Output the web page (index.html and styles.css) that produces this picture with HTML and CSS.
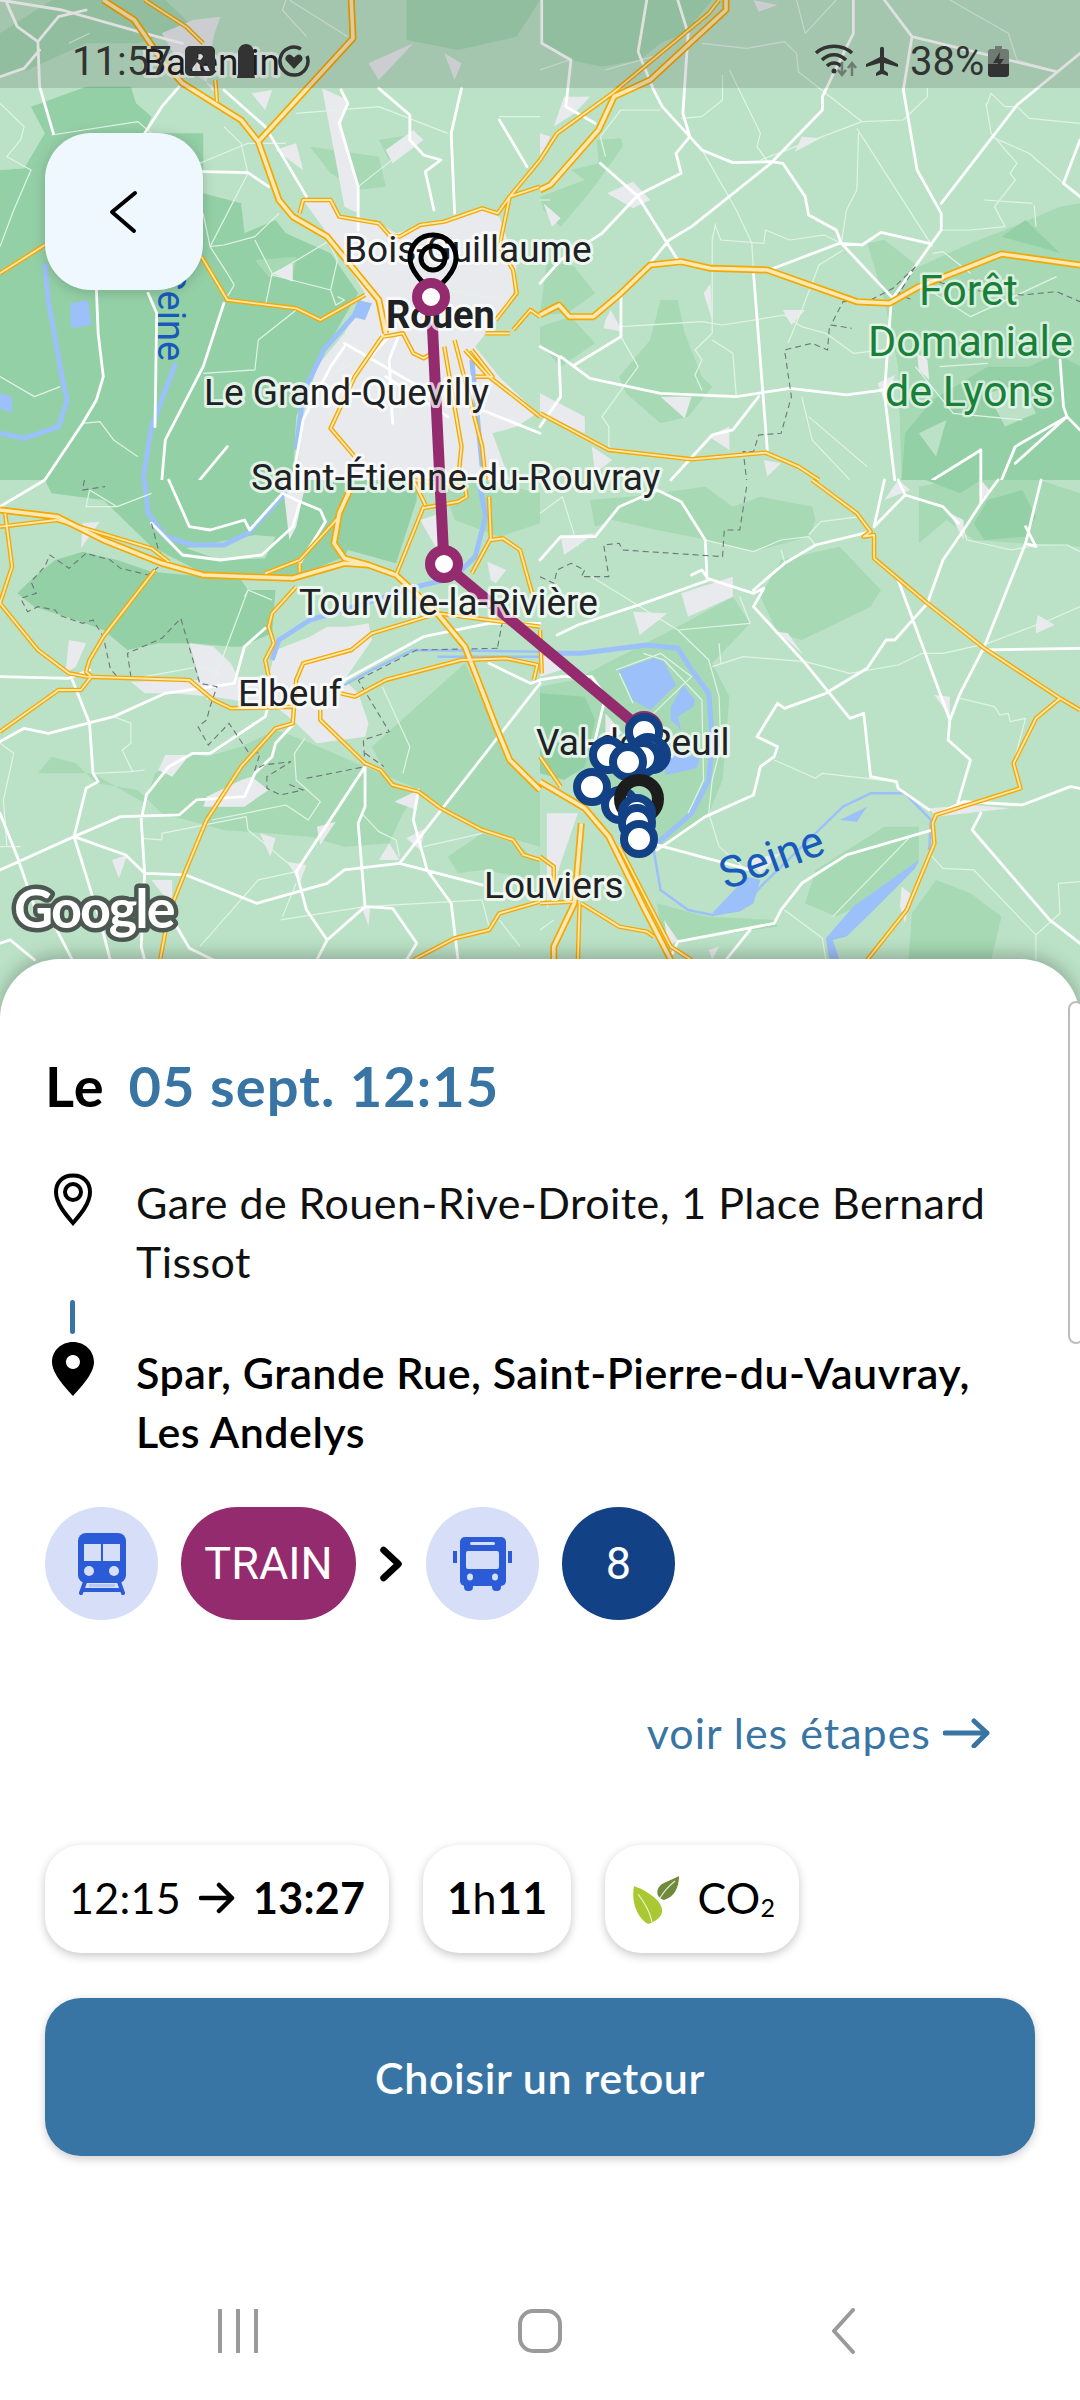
FILE: index.html
```html
<!DOCTYPE html>
<html lang="fr">
<head>
<meta charset="utf-8">
<title>Trajet</title>
<link rel="stylesheet" href="styles.css">
</head>
<body>
<div class="phone">
  <div class="map">
    <svg class="map-art" width="1080" height="1019" viewBox="0 0 1080 1019" xmlns="http://www.w3.org/2000/svg">
      <defs>
        <path id="y1" d="M420 0L540 80L590 130M625 240L630 305M0 820L130 735M585 770L660 900L860 925L930 960L1060 885M870 640L880 600L960 600L985 650L1100 670L1130 705L1160 710L1220 675L1290 665L1400 625L1445 640L1480 590L1568 560M1445 640L1480 590L1568 480M1480 590L1450 740L1490 810L1500 880L1440 960M1410 1000L1480 1000M1490 990L1540 930L1568 950M1110 1010L1030 1130L960 1285L1030 1370M1115 1010L1170 1000L1200 1060L1230 1075L1270 1050M1290 1040L1340 1340L1330 1440M1320 1020L1400 1340L1410 1440M1350 1050L1420 1130L1568 1250M1380 1130L1430 1130L1370 1050"/>
        <path id="w1" d="M300 0L390 60L470 180L530 250L700 360L750 425L810 600L850 650L950 710L1100 900L1120 1000M1020 0L1025 115L750 425"/>
        <path id="y2" d="M520 0L490 40L210 280L50 400L0 480M0 1240L200 1350L440 1378L655 1358L750 1400L810 1440"/>
        <path id="w2" d="M540 0L540 30L320 240L215 290L170 390L30 555L0 570M0 945L55 915L85 950L155 950L235 880L320 795L410 785L495 805L660 810L920 905L1015 910L1100 860L1340 762L1568 795"/>
        <path id="y3" d="M0 140L165 120L440 205L490 245M15 100L35 260L0 370L110 510L200 580L250 590L550 600L620 660L670 685L850 680M450 270L300 470L260 540L250 575L265 590L235 630L170 630L0 755M985 110L870 240L770 280M870 250L870 275M860 320L790 400L780 440L795 490L770 540L780 590M1230 80L1150 285M1225 85L1330 65L1355 50L1350 20L1200 0M1200 0L1235 75M1420 50L1425 175L1370 280M1425 180L1460 175L1510 210L1545 340M1568 440L1270 400L1080 460L1020 510L880 550L860 600L850 730L800 745L700 860L600 1020L540 1170L490 1300L465 1440M990 640L1030 650L1120 600L1340 540L1470 535L1560 555L1550 600M930 690L930 720L1060 850L1105 870L1140 915L1215 935L1280 985L1400 1050L1490 1080L1520 1125L1568 1140M1568 1265L1450 1300L1420 1350L1320 1375L1200 1440"/>
        <path id="w3" d="M0 90L165 110L300 180L470 250L590 285L850 295L1000 250L1070 255L1150 285L1270 400L1350 500L1440 740L1480 840L1568 930M1020 20L985 100L970 190L1000 235L1070 255"/>
        <path id="y4" d="M790 0L920 100L960 155L940 170L970 165L970 235L1125 370L1290 505L1510 655L1568 690M1510 655L1440 715L1375 850L1395 925L1150 1005L1140 1030L1145 1090L1065 1290L950 1440M0 830L60 920M0 450L5 580M115 1270L110 1440M120 1270L230 1340L310 1355L330 1370M0 1270L100 1265M0 1130L40 1160L40 1220M230 1100L380 1400L440 1440"/>
        <path id="w4" d="M0 905L130 985L200 1070L300 1280L380 1440M120 1030L100 1270L40 1400L40 1440"/>
      </defs>

      <rect class="land" x="0" y="0" width="1080" height="1019"/>

      <g transform="scale(.3444 .3333)">
        <path class="forest" d="M0 510L70 505L130 400L90 320L250 260L380 260L395 310L440 350L420 400L590 400L590 580L700 610L710 700L800 660L830 700L960 760L1040 880L1000 950L900 1130L860 1250L850 1440L0 1440Z"/>
        <path class="mid" d="M150 0L480 0L560 80L400 130L250 130L80 210L0 230L0 100Z"/>
        <path class="mid" d="M740 780L860 770L850 830L780 830ZM900 440L1100 470L1120 560L1040 570L960 520ZM1100 420L1220 400L1130 480ZM1180 0L1568 0L1500 110L1330 150L1180 120Z"/>
        <path class="light" d="M0 400L130 400L70 505L0 510Z"/>
        <path class="urban" d="M880 600L960 600L1000 660L1100 670L1150 700L1400 630L1450 650L1500 800L1490 880L1440 960L1380 1040L1450 1130L1560 1240L1500 1280L1430 1300L1480 1440L860 1440L880 1250L920 1100L1000 1000L1060 880L950 700ZM935 265L1010 300L990 370L1040 560L1040 640L1000 620L960 400ZM1290 160L1340 190L1320 240ZM470 100L560 60L640 50L620 110L600 250L640 300L620 260L520 190ZM730 280L790 270L770 330ZM800 450L860 430L880 510ZM790 820L850 790L850 845ZM1120 450L1200 390L1230 420L1140 490ZM1070 190L1200 130L1100 240Z"/>
        <path class="water-fill" d="M205 910L255 900L265 975L205 985ZM0 1180L35 1190L35 1240L0 1225ZM1040 900L1080 910L1060 960L1020 950Z"/>
        <path class="water" d="M130 790L140 900L180 1130L195 1200L170 1280L70 1315L0 1300M510 1090L440 1280L415 1440M1060 910L1000 980L940 1050L880 1180L860 1350M1370 1080L1400 1400"/>
        <path class="thin" d="M0 310L70 380L60 420L20 470L90 510L40 630L0 740M150 405L400 365L440 400M580 490L720 430L830 430M650 380L700 430L720 520L610 740L650 735L740 710L810 640M590 640L610 740L660 820L680 855L660 890M740 720L790 820L770 920M790 825L960 720M790 825L960 870L980 780L950 720M960 870L975 915L1000 900L980 890M750 1020L860 930M750 1020L740 1110L590 1120M1060 1040L1060 1070L900 1160M0 1130L100 1190L175 1160M240 1270L290 1265L330 1320L400 1370M260 100L200 130M860 340L1100 320L1300 400M1450 350L1568 350M1040 560L1150 470L1190 400M840 0L1010 110M890 110L820 30L830 0M1130 1060L1130 1150L1170 1250M1300 870L1460 900"/>
        <path class="road" d="M20 10L50 80L110 125L115 260L155 400M0 0L180 30L420 100L530 130M110 125L170 50L250 30M0 230L70 205L115 150M420 400L470 320L520 260M650 270L770 380L890 590M590 515L720 518L780 560M280 870L285 1000L300 1130L280 1200L240 1270L130 1440M650 910L590 1100L480 1320L470 1440M430 880L455 940L450 1280M990 270L1010 310L985 370L1040 560L1040 690M1100 265L1190 345L1190 420L1230 465L1280 480L1235 515L1260 630M1340 265L1310 400L1320 640M1450 360L1530 500M1130 1010L1030 1120L950 1220M1160 1000L1130 1080L1140 1270M1120 1130L1300 1250M1000 1030L1250 1180M1000 1040L960 1100L880 1260L850 1440M1400 1230L1568 1300M580 1440L660 1340"/>
        <use class="casing" href="#y1"/><use class="casing-w" href="#w1"/>
        <use class="fill-y" href="#y1"/><use class="fill-w" href="#w1"/>
      </g>

      <g transform="translate(540 0) scale(.3444 .3333)">
        <path class="mid" d="M350 900L400 900L420 1000L470 1130L500 1160L430 1250L350 1270L250 1180L230 1130L320 1020ZM950 730L1000 720L1100 800L1250 730L1350 690L1420 660L1510 620L1568 610L1568 1440L1050 1440L1040 1100L1000 900ZM0 590L130 540L90 510L170 490L165 420L235 415L240 440L150 570L60 680L10 630ZM20 780L100 800L160 880L80 940L0 945ZM0 1030L60 1100L160 1030L90 950L0 980ZM0 0L500 0L420 100L350 130L290 180L180 200L85 180L0 130Z"/>
        <path class="forest" d="M1340 710L1410 660L1510 760L1480 750ZM1050 1440L1060 1300L1140 1200L1300 1100L1420 1100L1500 1060L1568 1100L1568 1440Z"/>
        <path class="light" d="M1300 1180L1400 1150L1440 1240L1350 1280ZM1100 1300L1180 1260L1150 1370Z"/>
        <path class="urban" d="M70 290L145 290L100 340L40 380L60 320ZM195 580L270 545L320 600L270 625ZM740 455L760 410L815 415ZM475 880L495 850L500 960ZM190 960L205 930L240 995L185 985ZM705 930L770 930L730 975ZM350 1190L440 1190L420 1255ZM0 1180L130 1250L130 1300L0 1240ZM1095 1060L1125 1080L1130 1140L1100 1110ZM980 1150L1030 1125L1005 1220ZM620 0L690 15L635 35ZM0 400L30 410L0 470ZM10 610L60 655L35 680ZM150 1340L210 1380L160 1420ZM650 1380L700 1390L660 1430ZM490 1310L550 1280L550 1350Z"/>
        <path class="thin" d="M0 210L85 180M190 210L360 160M470 130L600 145L710 125L745 160L750 215L935 365L1055 360L1125 290L1125 265M550 210L640 400L630 440L665 490M770 100L860 0M770 100L745 0M530 225L530 300L470 350L410 355M350 330L235 330L175 410L190 470M935 365L640 480M925 400L920 570L890 630L875 730M920 385L1140 740M465 440L570 630L615 730L620 820M510 680L525 720L650 730L655 690L725 720L825 705L875 730M510 670L500 720L500 1000L450 1050L470 1080L450 1125L470 1170M500 1020L560 1060L570 1190M235 980L470 965L530 975L710 945L760 980L830 1000L910 1060L1000 1050M235 1010L285 1100L180 1250L200 1280L200 1350M1295 320L1310 280L1350 320L1385 320L1420 355L1568 370M1295 310L1310 400L1385 490L1365 520L1380 540L1320 620L1350 680L1250 690L1165 690M1310 410L1420 460L1520 550M1435 615L1440 680M1140 760L1170 755L1250 820M880 750L810 795L760 930L720 1030M760 1190L790 1320L900 1440M780 1250L950 1400M1130 870L1250 950L1500 830M1190 0L1360 100L1385 180L1500 215M0 600L30 600M1160 1100L1300 1090M1290 600L1430 610M1090 1100L1200 1240L1400 1260"/>
        <path class="road" d="M310 0L285 155L330 270L355 320L435 410L470 450L560 488L670 485L705 490L770 590L780 645L860 690L875 730L1020 890M400 0L430 100L415 340L435 410L395 460L410 520L285 585L180 700L60 780L0 850M175 490L285 590L400 780M820 290L820 330L670 490L440 680L375 720L315 795M855 215L820 290M910 0L910 100L855 215M1000 0L1080 110L1055 270L1095 510L1165 640L1165 690L1020 900L1000 1180L1030 1440M1568 160L1385 315L1165 610M665 810L870 730L935 735L990 697L1130 730M620 820L660 1350M100 1095L235 1010L235 880M60 1070L145 1135L350 1180L570 1190L725 1165L890 1185L1000 1170M635 1190L560 1290L500 1305L380 1440M0 1040L55 1070L60 1190L0 1280M5 0L5 130L90 180L75 320L160 370M1510 1080L1520 1220L1530 1250L1380 1340L1340 1440M1530 1250L1568 1290M1280 1350L1140 1440M1280 1350L1280 1440M1568 420L1520 550L1568 590M1080 110L1360 180L1500 215M1530 1250L1380 1390"/>
        <path class="dash" d="M1090 800L1040 885L1085 900M1090 800L1025 865L960 900L880 905L845 975L905 985M840 985L835 1050L790 1030L710 1050L730 1190L700 1300L635 1305L620 1355L590 1355L600 1440M1130 840L1250 870L1400 885L1500 875L1568 905"/>
        <use class="casing" href="#y2"/><use class="casing-w" href="#w2"/>
        <use class="fill-y" href="#y2"/><use class="fill-w" href="#w2"/>
      </g>

      <g transform="translate(0 480) scale(.3444 .3333)">
        <path class="forest" d="M130 0L1210 0L1210 60L1150 250L1010 210L1000 230L850 295L590 280L440 200L300 60L150 40Z"/>
        <path class="forest" d="M160 240L240 215L340 240L440 275L700 300L720 330L800 330L790 460L700 500L670 500L560 490L460 490L370 510L300 450L220 420L100 380L50 340L100 290Z"/>
        <path class="light" d="M540 205L740 165L800 170L770 235L640 240Z"/>
        <path class="mid" d="M110 880L150 830L220 850L280 910L400 930L470 1000L650 1050L900 1070L1000 1100L1130 1090L1170 1000L1220 930L1060 860L880 780L800 750L700 800L600 830L550 820L450 880L420 970L270 880ZM1080 800L1350 550L1440 750L1480 850L1568 930L1568 1100L1500 1080L1400 1050L1280 980L1215 935L1130 900ZM1300 1130L1400 1060L1500 1090L1568 1150L1568 1200L1400 1170L1330 1180ZM1280 0L1400 0L1568 40L1568 130L1450 170L1320 120Z"/>
        <path class="urban" d="M800 510L900 470L950 440L1010 440L1070 430L1080 480L1000 600L1040 640L1070 730L1060 770L920 790L850 720L800 680L620 650L500 640L420 640L380 605L580 600L550 490L620 500L670 550L690 590L780 590ZM200 480L250 490L220 560L190 580ZM460 870L480 825L550 825L500 890ZM600 950L700 900L730 890L780 930L710 980L590 980ZM755 1060L800 1075L785 1130ZM325 1140L370 1125L345 1195ZM920 1040L975 1025L930 1095ZM835 1145L890 1155L870 1210ZM440 1200L500 1200L500 1280ZM1145 965L1215 930L1210 990ZM1100 1140L1130 1090L1160 1140ZM1180 1075L1235 1045L1220 1110ZM1050 1280L1075 1280L1070 1340ZM820 0L890 0L860 140L840 180ZM1220 120L1280 100L1290 170L1270 210ZM1415 245L1470 270L1440 310L1425 300ZM235 205L290 125L240 130Z"/>
        <path class="water" d="M420 0L430 100L480 170L560 195L650 195L720 160L800 70L840 20M1390 0L1410 110L1380 230L1340 270L1290 300L1210 320L1060 370L900 420L810 480L790 540"/>
        <path class="water-thin" d="M1000 615L1080 570L1200 510L1568 515M1270 530L1568 530"/>
        <path class="thin" d="M0 790L40 820L10 960L20 1100M270 880L380 875L420 870M330 710L380 730L380 790L355 810L385 875M420 590L580 560L640 580M615 1020L830 975L895 1020L930 965L860 900L855 820L885 775M470 1080L470 1060L715 1010L720 1050L860 1170M410 1075L470 1080M580 1400L750 1200L860 1175M815 1320L1060 1280L1400 1260L1420 1340M820 1310L860 1210M1050 1000L1100 1055L1150 1080L1160 1130M1170 880L1190 800L1110 620M1230 1100L1400 1060M1450 1320L1510 1400M710 350L720 330L790 360M600 660L720 330M260 30L340 80L440 40M340 80L250 80L260 30M0 1100L60 1100"/>
        <path class="road" d="M0 590L200 595L260 570M0 80L130 0M490 0L550 140L610 150L710 120L725 150L820 40L860 60L930 90L945 125L870 250M440 130L530 225L640 240L760 225L850 140L870 70M0 785L70 745L140 760L330 710L480 640L680 610L710 500L770 445M210 600L260 730L270 880L285 905L250 925L215 1070L0 1170M215 1070L350 1010L520 1005L570 960L710 950L740 880L790 830L800 790L850 735M420 1180L410 1020L425 945L490 860L560 820L610 820L770 710L790 640M420 1180L540 1185L745 1270L950 1210L1000 1170L1160 1150L1400 1215M215 1070L290 1320L320 1440M215 1070L365 1125L420 1180L410 1400L420 1440M0 1000L50 1130L100 1280M860 1175L1060 860L1060 980L1040 1030L1060 1280L950 1380L920 1440M860 1175L890 1290L950 1380M1060 1280L1140 1285L1210 1390L1180 1440M1160 1150L1568 610M1215 930L1200 1020L1240 1170L1310 1270L1330 1440M1420 550L1540 610L1568 600M1000 600L1230 470L1420 430L1568 430M0 1390L30 1380L100 1440M490 1300L550 1405L620 1440M150 1320L210 1440"/>
        <path class="dash" d="M245 0L240 30L305 20M440 130L460 210L480 245L430 285L350 265L320 240L250 220L200 265L145 225L130 260L90 305L105 340L60 355L80 395L110 380L160 390L170 405L240 430L270 420L300 470L320 565L340 590L380 590L370 520L470 475L525 415L580 610L630 620L610 680L600 720L575 740L605 795L665 730L720 815L755 820L740 870L765 855L845 845L775 890L775 925L815 945L880 930L830 910M890 895L1060 860L1055 780L1130 755L1040 600M1060 820L1115 860M1445 500L1460 420M1445 505L1210 510L1040 600"/>
        <use class="casing" href="#y3"/><use class="casing-w" href="#w3"/>
        <use class="fill-y" href="#y3"/><use class="fill-w" href="#w3"/>
      </g>

      <g transform="translate(540 480) scale(.3444 .3333)">
        <path class="mid" d="M145 60L260 50L480 20L560 80L640 50L790 80L800 120L780 170L620 215L490 180L340 150L210 120L160 140ZM640 350L700 240L870 200L990 330L960 380L760 480L690 460ZM400 440L560 350L610 430L500 550L550 650L530 900L490 1000L350 1100L250 1050L150 880L0 880L0 620L100 600ZM340 1270L480 1310L680 1320L690 1340L400 1380L350 1340ZM770 1270L800 1170L1000 1040L1100 1040L1100 1150L1000 1240L860 1310ZM1080 1300L1150 1200L1250 1240L1340 1310L1310 1440L1070 1440ZM1100 20L1200 0L1450 0L1568 40L1568 200L1400 190L1260 180L1180 120L1100 190Z"/>
        <path class="forest" d="M1260 130L1300 60L1400 30L1440 110L1410 170L1290 180ZM1120 0L1220 40L1280 0ZM0 640L130 650L160 720L130 860L70 900L0 880Z"/>
        <path class="urban" d="M60 170L160 160L70 225ZM410 340L560 290L560 350L430 410ZM270 395L370 400L290 465ZM690 455L720 460L765 525ZM1440 435L1445 405L1495 435L1440 460ZM1145 645L1190 650L1190 710ZM1130 985L1250 975L1365 985L1150 1010ZM1045 1280L1050 1220L1075 1240L1060 1330ZM600 1140L700 1120L640 1180ZM20 1000L110 1000L60 1150L20 1290ZM190 700L240 760L190 780ZM1000 60L1040 0L1075 30ZM1190 100L1230 120L1230 180ZM360 1320L400 1380L375 1400ZM0 515L90 560L0 590ZM490 1410L520 1400L500 1440ZM1280 0L1305 30L1280 60Z"/>
        <path class="water-fill" d="M230 570L330 535L360 545L395 615L320 690L270 660ZM380 680L415 615L450 660L445 680L400 710L410 750L380 720ZM360 820L465 830L455 865L365 885ZM870 1020L950 980L920 1025ZM500 1300L600 1190L640 1200L620 1270L580 1295ZM830 1375L910 1280L1100 1140L1090 1165L960 1300L890 1370L850 1380L870 1440L840 1440Z"/>
        <path class="water" d="M0 520L120 520L310 495L400 505L440 570L490 640L500 780L490 900L440 1000L340 1090"/>
        <path class="water-thin" d="M330 1110L350 1230L430 1290L500 1305L580 1290L650 1210L770 1090L880 980L960 940L1060 940L1135 1020L1130 1110"/>
        <path class="thin" d="M0 100L65 50L110 200M150 290L400 450L490 540L520 650L525 800L500 900L490 1000L520 1100L600 1170M400 450L610 430L580 350M520 490L525 550M500 560L590 530L770 545L900 580L1040 555L1110 520L1170 520L1300 490L1480 420L1568 380M480 180L620 215L700 180L780 170L800 195M700 210L710 245M780 165L815 125L930 110M680 840L800 895L820 880L1030 905M1220 655L1320 680L1335 705L1360 700L1365 725L1410 715L1375 850M1130 1120L1170 1165L1260 1170L1440 1365L1510 1300L1505 1210L1568 1205M1440 1365L1440 1440M710 1290L820 1375L830 1440M850 1310L1070 1075M220 570L350 520L440 590L330 700M230 580L270 670M300 520L360 540L470 660L475 900L430 1000M1230 150L1240 180L1370 210L1440 195L1530 195L1568 215M0 1350L40 1320"/>
        <path class="road" d="M0 240L60 170L160 170L230 80L340 30L410 65L480 180L485 295L620 340L650 325L620 380L770 550L900 715L940 700L960 890L1035 905L1040 925L1130 990M50 465L110 435L300 370L490 300M440 285L470 270L490 300M620 330L710 250L800 195L960 155M830 640L950 565L1005 480L1030 480L1125 370L1170 240L1230 150L1280 70L1280 0M830 640L710 685L690 670L630 770L690 800L680 830L640 860L620 945L480 1010L340 1110M340 1095L610 1170M1190 720L1220 640L1290 500L1410 190L1455 0M1410 190L1440 200M1410 140L1440 200M1040 300L1190 720L1185 780L1250 840L1210 980M1255 1050L1280 1000M1255 1050L1480 1320L1568 1390M1140 1050L890 1125L760 1210L700 1290L680 1330L400 1385L385 1420M1150 1005L1230 965L1400 975L1540 920L1568 925M1290 510L1568 505M970 140L1060 45L1170 80L1215 130M1060 45L1040 0M1000 0L970 140M1330 0L1280 70M0 600L60 590L150 590L190 650L160 780M540 1440L610 1350"/>
        <path class="dash" d="M0 290L40 310L50 270L90 250L130 270L120 290L200 290L185 195L230 190L240 210L530 230L535 150L580 150L600 20"/>
        <use class="casing" href="#y4"/><use class="casing-w" href="#w4"/>
        <use class="fill-y" href="#y4"/><use class="fill-w" href="#w4"/>
      </g>

      <path class="route" d="M431 297L444 564L640 728"/>

      <text class="lab" x="143" y="75">Barentin</text>
      <text class="lab" x="344" y="262">Bois-Guillaume</text>
      <text class="lab lab-bold" x="386" y="328">Rouen</text>
      <text class="lab" x="204" y="405">Le Grand-Quevilly</text>
      <text class="lab" x="251" y="490">Saint-Étienne-du-Rouvray</text>
      <text class="lab" x="299" y="615">Tourville-la-Rivière</text>
      <text class="lab" x="238" y="706">Elbeuf</text>
      <text class="lab" x="536" y="755">Val-de-Reuil</text>
      <text class="lab" x="484" y="898">Louviers</text>
      <text class="lab-green" x="919" y="305">Forêt</text>
      <text class="lab-green" x="868" y="356">Domaniale</text>
      <text class="lab-green" x="885" y="406">de Lyons</text>
      <text class="lab-water" transform="translate(158 268) rotate(90)">Seine</text>
      <text class="lab-water lab-water-big" transform="translate(726 890) rotate(-20)">Seine</text>

      <g class="start-pin">
        <path d="M433 235C420 235 410 245 410 258C410 271 423 283 433 292C443 283 456 271 456 258C456 245 446 235 433 235Z"/>
        <circle cx="433" cy="258" r="12"/>
      </g>
      <circle class="stop-purple" cx="431" cy="297" r="14"/>
      <circle class="stop-purple" cx="444" cy="564" r="14"/>
      <circle class="stop-purple" cx="644" cy="730" r="14"/>
      <circle class="stop-blue" cx="644" cy="732" r="15"/>
      <circle class="stop-blue" cx="652" cy="755" r="15"/>
      <circle class="stop-blue" cx="648" cy="752" r="15"/>
      <circle class="stop-blue" cx="643" cy="758" r="15"/>
      <circle class="stop-blue" cx="608" cy="755" r="15"/>
      <circle class="stop-blue" cx="628" cy="762" r="15"/>
      <circle class="stop-blue" cx="592" cy="787" r="15"/>
      <circle class="stop-blue" cx="620" cy="805" r="15"/>
      <circle class="stop-black" cx="639" cy="799" r="19"/>
      <circle class="stop-blue" cx="637" cy="813" r="15"/>
      <circle class="stop-blue" cx="637" cy="823" r="15"/>
      <circle class="stop-blue" cx="639" cy="839" r="15"/>
      <text class="google" x="14" y="928">Google</text>
    </svg>

    <div class="statusbar">
      <div class="status-left">
        <span class="clock">11:57</span>
        <svg class="st-img" viewBox="0 0 30 30"><path class="st-fill" d="M5 0H25A5 5 0 0 1 30 5V25A5 5 0 0 1 25 30H5A5 5 0 0 1 0 25V5A5 5 0 0 1 5 0ZM15 8A3 3 0 1 0 15.1 8ZM5 25L12 16L17 21L21 17L25 25Z" fill-rule="evenodd"/></svg>
        <svg class="st-lock" viewBox="0 0 18 34"><path class="st-fill" d="M9 0C14 0 17 4 17 9V30L18 34H0L1 30V9C1 4 4 0 9 0Z"/></svg>
        <svg class="st-heart" viewBox="0 0 32 32"><path class="st-ring" d="M23 4A14 14 0 1 0 29 11"/><path class="st-fill" d="M16 24L8 15.5C6 12 10 8 13 10L16 12.5L19 10C22 8 26 12 24 15.5Z"/></svg>
      </div>
      <div class="status-right">
        <svg class="st-wifi" viewBox="0 0 46 34"><path class="st-arc" d="M2 9C12 0 28 0 38 9M8 16C15 9 25 9 32 16M13 22C17 18 23 18 27 22"/><circle class="st-fill" cx="20" cy="27" r="2.5"/><path class="st-arrows" d="M28 18V30M24 26L28 31L32 26M38 32V20M34 24L38 19L42 24"/></svg>
        <svg class="st-plane" viewBox="0 0 32 30"><path class="st-fill" d="M14 3C14 0 18 0 18 3V11L32 18V21L18 17V24L22 27V30L16 28L10 30V27L14 24V17L0 21V18L14 11Z"/></svg>
        <span class="pct">38%</span>
        <svg class="st-batt" viewBox="0 0 21 31"><path class="st-batt-top" d="M7 0H14V3H18A3 3 0 0 1 21 6V18H0V6A3 3 0 0 1 3 3H7Z"/><path class="st-fill" d="M0 18H21V28A3 3 0 0 1 18 31H3A3 3 0 0 1 0 28Z"/><path class="st-fill" d="M12 6L5 17H10L8 24L16 13H11Z"/></svg>
      </div>
    </div>

    <button class="back" type="button" aria-label="Retour">
      <svg width="30" height="46" viewBox="0 0 30 46"><path class="back-chev" d="M26 4L3 23L25 42"/></svg>
    </button>
  </div>

  <div class="sheet">
    <span class="side-tab"></span>
    <h1 class="when"><span class="le">Le</span><span class="date">05 sept. 12:15</span></h1>

    <div class="place">
      <svg class="pin" viewBox="0 0 40 53"><path class="pin-line" d="M20 2.5C9 2.5 3 10 3 19C3 31 14 43 20 50C26 43 37 31 37 19C37 10 31 2.5 20 2.5Z"/><circle class="pin-line" cx="20" cy="19" r="8"/></svg>
      <p class="addr">Gare de Rouen-Rive-Droite, 1 Place Bernard Tissot</p>
    </div>
    <span class="link-bar"></span>
    <div class="place">
      <svg class="pin pin-full" viewBox="0 0 42 54"><path class="pin-solid" d="M21 0C9 0 0 9 0 20C0 32 14 46 21 54C28 46 42 32 42 20C42 9 33 0 21 0ZM21 13A7 7 0 1 1 20.9 13Z" fill-rule="evenodd"/></svg>
      <p class="addr addr-strong">Spar, Grande Rue, Saint-Pierre-du-Vauvray, Les Andelys</p>
    </div>

    <div class="modes">
      <span class="mode-ic">
        <svg width="48" height="62" viewBox="0 0 48 62"><path class="tr-line" d="M7 49L3 60M41 49L45 60M5 57H43"/><path class="tr-soft" d="M11 51H37V54H11Z"/><rect class="tr-body" x="0" y="0" width="48" height="50" rx="8"/><rect class="tr-win" x="6" y="11" width="17" height="17"/><rect class="tr-win" x="25" y="11" width="17" height="17"/><circle class="tr-win" cx="11" cy="38" r="5"/><circle class="tr-win" cx="36" cy="38" r="5"/></svg>
      </span>
      <span class="badge badge-train">TRAIN</span>
      <svg class="chev" width="24" height="36" viewBox="0 0 23 36"><path class="chev-line" d="M4 4L19 18L4 32"/></svg>
      <span class="mode-ic">
        <svg width="59" height="54" viewBox="0 0 59 54"><rect class="tr-body" x="0" y="14" width="4" height="12"/><rect class="tr-body" x="55" y="14" width="4" height="12"/><path class="tr-body" d="M11 44H20V50A4 4 0 0 1 16 54H15A4 4 0 0 1 11 50ZM39 44H48V50A4 4 0 0 1 44 54H43A4 4 0 0 1 39 50Z"/><rect class="tr-body" x="7" y="0" width="46" height="49" rx="5"/><rect class="tr-win" x="17" y="5" width="25" height="3" rx="1.5"/><rect class="tr-win" x="13" y="14" width="33" height="18" rx="2"/><ellipse class="tr-win" cx="17" cy="40" rx="3" ry="3.500"/><ellipse class="tr-win" cx="42" cy="40" rx="3" ry="3.500"/></svg>
      </span>
      <span class="badge badge-line">8</span>
    </div>

    <a class="steps" href="#"><span>voir les étapes</span><svg width="47" height="30" viewBox="0 0 47 30"><path class="arrow-line" d="M2 15H44M31 3L44 15L31 28"/></svg></a>

    <div class="chips">
      <div class="chip chip-time"><span>12:15</span><svg width="36" height="32" viewBox="0 0 36 32"><path class="chip-arrow" d="M2 16H33M20 3L33 16L20 29"/></svg><strong>13:27</strong></div>
      <div class="chip chip-dur"><strong>1</strong><span>h</span><strong>11</strong></div>
      <div class="chip chip-co2">
        <svg width="47" height="48" viewBox="0 0 47 48"><path class="leaf-a" d="M2 10C18 16 31 26 30 36C29 42 22 46 16 48C5 42 -1 26 2 10Z"/><path class="leaf-vein" d="M6 18C13 27 18 36 20 46"/><path class="leaf-b" d="M47 0C47 12 42 21 32 24C24 22 23 13 30 8C35 5 42 3 47 0Z"/><path class="leaf-vein" d="M43 5C37 10 32 15 28 22"/></svg>
        <span class="co2">CO<sub>2</sub></span>
      </div>
    </div>

    <button class="cta" type="button">Choisir un retour</button>

    <nav class="navbar">
      <svg width="40" height="44" viewBox="0 0 40 44"><path class="nav-line" d="M2 1V43M20 1V43M38 1V43"/></svg>
      <svg class="nav-home" width="44" height="44" viewBox="0 0 44 44"><rect class="nav-line" x="2" y="2" width="40" height="40" rx="13"/></svg>
      <svg class="nav-back" width="24" height="46" viewBox="0 0 24 46"><path class="nav-line" d="M22 2L3 23L22 44"/></svg>
    </nav>
  </div>
</div>
</body>
</html>
```

FILE: styles.css
```css
* { box-sizing: border-box; }
html, body { margin: 0; padding: 0; background: #fff; }
body { font-family: "Lato", "Noto Sans", sans-serif; color: #000; }

.phone { width: 1080px; height: 2400px; overflow: hidden; position: relative; background: #fff; }

/* map */
.map { height: 1019px; position: relative; overflow: hidden; }
.map-art { display: block; }
.map-art path, .map-art rect { vector-effect: non-scaling-stroke; }
.land { fill: #bbe2c6; }
.forest { fill: #94d0a6; }
.mid { fill: #a6d9b4; }
.light { fill: #bbe2c6; }
.urban { fill: #e8eaed; }
.water-fill { fill: #9cc0f9; }
.water { fill: none; stroke: #9cc0f9; stroke-width: 5; stroke-linejoin: round; }
.water-thin { fill: none; stroke: #9cc0f9; stroke-width: 2.5; stroke-linejoin: round; }
.thin { fill: none; stroke: #e2f3e7; stroke-width: 1.2; stroke-linejoin: round; }
.road { fill: none; stroke: #fff; stroke-width: 2.8; stroke-linejoin: round; stroke-linecap: round; }
.dash { fill: none; stroke: #70757a; stroke-width: 1.1; stroke-dasharray: 6 4; }
.casing { fill: none; stroke: #f5a800; stroke-width: 4.5; stroke-linejoin: round; }
.casing-w { fill: none; stroke: #f5a800; stroke-width: 7; stroke-linejoin: round; }
.fill-y { fill: none; stroke: #fee9b4; stroke-width: 1.8; stroke-linejoin: round; }
.fill-w { fill: none; stroke: #fee9b4; stroke-width: 3.6; stroke-linejoin: round; }

.lab, .lab-green, .lab-water { font-family: "Roboto", sans-serif; font-size: 37px; }
.lab { fill: #202124; paint-order: stroke; stroke: rgba(255, 255, 255, .72); stroke-width: 6px; stroke-linejoin: round; }
.lab-bold { font-weight: 700; font-size: 38px; }
.lab-green { fill: #188038; font-size: 43px; paint-order: stroke; stroke: rgba(255, 255, 255, .6); stroke-width: 5px; stroke-linejoin: round; }
.lab-water { fill: #185abc; font-size: 38px; }
.lab-water-big { font-size: 44px; }
.google { font-family: "Lato", sans-serif; font-weight: 700; font-size: 54px; letter-spacing: -2px; fill: #fff; paint-order: stroke; stroke: #4c5851; stroke-width: 9px; stroke-linejoin: round; }

.route { fill: none; stroke: #942b6e; stroke-width: 11; }
.start-pin path, .start-pin circle { fill: none; stroke: #000; stroke-width: 5; }
.stop-purple { fill: #fff; stroke: #942b6e; stroke-width: 10; }
.stop-blue { fill: #fff; stroke: #134185; stroke-width: 8; }
.stop-black { fill: none; stroke: #1c1c1c; stroke-width: 12; }

/* status bar */
.statusbar { position: absolute; top: 0; left: 0; width: 100%; height: 88px; background: rgba(0, 0, 0, .12); display: flex; justify-content: space-between; align-items: flex-start; padding: 44px 71px 0 72px; }
.status-left, .status-right { display: flex; align-items: center; height: 34px; font-family: "Roboto", sans-serif; font-size: 40px; color: #333; }
.clock { width: 93px; margin-right: 20px; }
.st-img { width: 30px; height: 30px; margin-right: 22px; }
.st-lock { width: 18px; height: 34px; margin-right: 23px; }
.st-heart { width: 32px; height: 32px; }
.st-fill { fill: #333; }
.st-ring { fill: none; stroke: #333; stroke-width: 3.5; }
.st-arc { fill: none; stroke: #333; stroke-width: 3.5; }
.st-arrows { fill: none; stroke: #6f7a72; stroke-width: 2.5; }
.st-wifi { width: 46px; height: 34px; margin-right: 6px; }
.st-plane { width: 32px; height: 30px; margin-right: 12px; }
.pct { width: 72px; margin-right: 6px; }
.st-batt { width: 21px; height: 31px; }
.st-batt-top { fill: #6f7a72; }

.back { position: absolute; left: 45px; top: 133px; width: 158px; height: 157px; border: 0; border-radius: 46px; background: #f0f8ff; box-shadow: 0 2px 14px rgba(0, 0, 0, .18); display: flex; align-items: center; justify-content: center; padding: 0; }
.back-chev { fill: none; stroke: #000; stroke-width: 4; stroke-linecap: round; stroke-linejoin: round; }

/* bottom sheet */
.sheet { position: relative; margin-top: -60px; height: 1441px; background: #fff; border-radius: 60px 60px 0 0; box-shadow: 0 -4px 18px rgba(0, 0, 0, .25); padding: 92px 45px 0; display: flex; flex-direction: column; }
.side-tab { position: absolute; right: -4px; top: 42px; width: 16px; height: 343px; border: 2px solid #bdbdbd; border-radius: 12px; background: #fff; }

.when { margin: 0; height: 70px; line-height: 70px; font-size: 56px; font-weight: 700; display: flex; gap: 24px; letter-spacing: 1px; }
.le { color: #000; }
.date { color: #3975a4; }

.place { display: flex; align-items: flex-start; }
.when + .place { margin-top: 52px; }
.when + .place .pin { margin-top: 0; }
.pin { width: 40px; height: 53px; margin: 2px 43px 0 8px; flex: none; }
.pin-full { width: 42px; height: 54px; margin: -1px 42px 0 7px; }
.pin-line { fill: none; stroke: #000; stroke-width: 4; }
.pin-solid { fill: #000; }
.addr { margin: 0; font-size: 43px; line-height: 59px; letter-spacing: .45px; color: #111; }
.addr-strong { font-family: "Lato Semibold", "Lato", sans-serif; font-weight: 600; font-size: 43px; color: #000; letter-spacing: .5px; padding-right: 30px; }
.link-bar { width: 5px; height: 34px; border-radius: 3px; background: #3975a4; margin: 9px 0 9px 25px; flex: none; }

.modes { display: flex; align-items: center; gap: 23px; margin-top: 46px; height: 113px; }
.mode-ic { width: 113px; height: 113px; border-radius: 50%; background: #d6dff7; display: flex; align-items: center; justify-content: center; flex: none; }
.tr-body { fill: #2b5bd7; }
.tr-win { fill: #d6dff7; }
.tr-soft { fill: #b8c8f0; }
.tr-line { fill: none; stroke: #2b5bd7; stroke-width: 4; stroke-linecap: round; }
.badge { height: 113px; border-radius: 57px; display: flex; align-items: center; justify-content: center; color: #fff; font-family: "Roboto", sans-serif; font-size: 45px; flex: none; }
.badge-train { width: 175px; background: #942b6e; }
.badge-line { width: 113px; background: #134185; }
.chev-line { fill: none; stroke: #000; stroke-width: 6.500; stroke-linecap: round; stroke-linejoin: round; }

.steps { display: flex; align-items: center; justify-content: flex-end; gap: 12px; margin: 83px 0 0; padding-right: 45px; height: 59px; font-size: 43px; letter-spacing: 1px; color: #3975a4; text-decoration: none; }
.arrow-line { fill: none; stroke: #3975a4; stroke-width: 5; stroke-linecap: round; stroke-linejoin: round; }

.chips { display: flex; gap: 34px; margin-top: 83px; }
.chip { height: 108px; border-radius: 36px; background: #fff; box-shadow: 0 3px 10px rgba(0, 0, 0, .22); display: flex; align-items: center; padding: 0 24px 3px; font-size: 43px; letter-spacing: .3px; }
.chip-time { gap: 18px; }
.chip-time svg { flex: none; }
.chip-dur { padding: 0 24px 3px; }
.chip-co2 { gap: 18px; padding-right: 24px; padding-left: 27px; }
.chip-co2 svg { margin-top: 4px; }
.leaf-a { fill: #a9c832; }
.leaf-b { fill: #6f8a3a; }
.leaf-vein { fill: none; stroke: #fff; stroke-width: 1.2; opacity: .8; }
.chip-arrow { fill: none; stroke: #000; stroke-width: 4.500; stroke-linejoin: round; stroke-linecap: round; }
.co2 sub { font-size: 25px; line-height: 0; vertical-align: -3px; }

.cta { margin-top: 45px; height: 158px; width: 990px; flex: none; border: 0; border-radius: 36px; background: #3975a4; color: #fff; font-family: "Lato Semibold", "Lato", sans-serif; font-size: 43px; font-weight: 600; letter-spacing: .6px; box-shadow: 0 3px 10px rgba(0, 0, 0, .2); }

.navbar { display: flex; align-items: center; margin: 152px 0 0 173px; height: 46px; }
.nav-home { margin-left: 260px; }
.nav-back { margin-left: 269px; }
.nav-line { fill: none; stroke: #9a9a9a; stroke-width: 4; stroke-linecap: round; stroke-linejoin: round; }
```
